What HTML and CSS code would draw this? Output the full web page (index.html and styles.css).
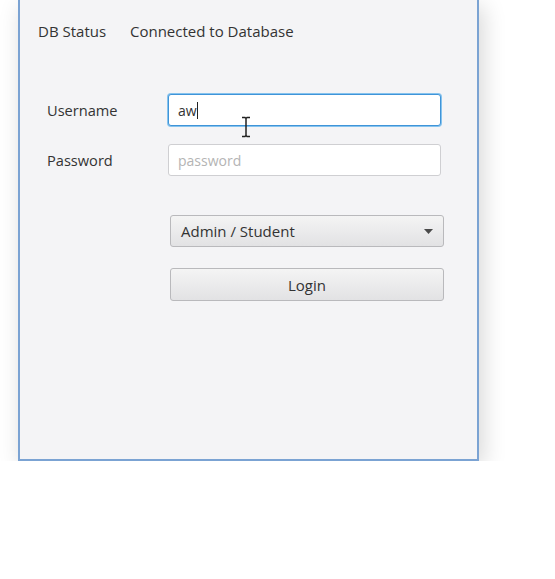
FILE: index.html
```html
<!DOCTYPE html>
<html>
<head>
<meta charset="utf-8">
<link rel="stylesheet" href="styles.css">
</head>
<body>
<div class="window">
  <div class="status">
    <span class="status-label">DB Status</span>
    <span class="status-value">Connected to Database</span>
  </div>
  <div class="form">
    <label class="label">Username</label>
    <div class="field focused"><span class="value">aw</span><span class="caret"></span></div>
    <label class="label">Password</label>
    <div class="field"><span class="placeholder">password</span></div>
  </div>
  <div class="actions">
    <div class="combo"><span>Admin / Student</span><svg class="arrow" width="9" height="5" viewBox="0 0 9 5"><path d="M0 0h9L4.5 5z" fill="#4a4a4a"/></svg></div>
    <div class="button">Login</div>
  </div>
  <svg class="ibeam" width="12" height="22" viewBox="0 0 12 22"><path d="M2 1.5h3l1 1 1-1h3M6 2.5v17M2 20.5h3l1-1 1 1h3" fill="none" stroke="#222" stroke-width="1.5"/></svg>
</div>
</body>
</html>
```
FILE: styles.css
```css
html, body {
  margin: 0;
  padding: 0;
  background: #ffffff;
  font-family: "Open Sans", "Noto Sans", sans-serif;
  color: #333333;
}
.window {
  position: relative;
  box-sizing: border-box;
  margin-left: 18px;
  width: 461px;
  height: 461px;
  background: #f4f4f6;
  border: 2px solid #7ba3d3;
  border-top: none;
  box-shadow: 4px 6px 22px rgba(0, 0, 0, 0.16);
}
.status {
  display: flex;
  padding: 21px 0 0 18px;
  font-size: 15px;
  line-height: 20px;
}
.status-label {
  width: 92px;
}
.form {
  display: grid;
  grid-template-columns: 121px 273px;
  row-gap: 18px;
  margin: 53px 0 0 27px;
  align-items: center;
}
.label {
  font-size: 14.6px;
  line-height: 20px;
}
.field {
  box-sizing: border-box;
  height: 32px;
  display: flex;
  align-items: center;
  padding-left: 9px;
  background: #ffffff;
  border: 1px solid #cfcfd2;
  border-radius: 3px;
  font-size: 14px;
}
.field.focused {
  border-color: #3f94d8;
  box-shadow: 0 0 0 1px #86c3ee;
}
.value {
  color: #333;
}
.caret {
  width: 1px;
  height: 17px;
  background: #222;
}
.placeholder {
  color: #b4b4b4;
}
.actions {
  display: flex;
  flex-direction: column;
  gap: 21px;
  margin: 39px 0 0 150px;
  width: 274px;
}
.combo, .button {
  box-sizing: border-box;
  height: 33px;
  border: 1px solid #b9b9bc;
  border-radius: 3px;
  background: linear-gradient(#f4f4f4, #e2e2e4);
  font-size: 15px;
  color: #333;
  display: flex;
  align-items: center;
}
.combo {
  justify-content: space-between;
  padding: 0 10px;
  height: 32px;
}
.button {
  justify-content: center;
}
.ibeam {
  position: absolute;
  left: 220px;
  top: 116px;
}
```
